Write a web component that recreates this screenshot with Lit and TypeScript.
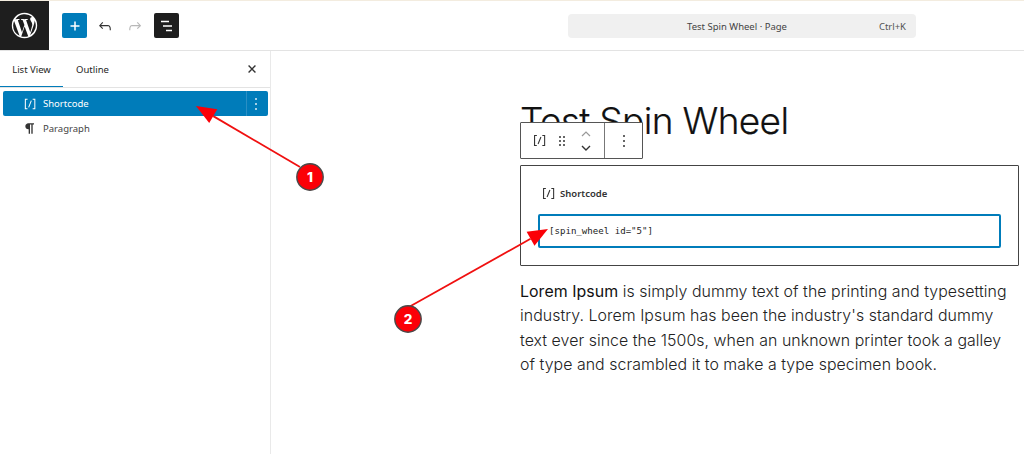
import { LitElement, html, css, svg } from "lit";
import { customElement } from "lit/decorators.js";

const shortcodeIcon = (size: number, color: string) => html`<svg width=${size} height=${size} viewBox="0 0 24 24" fill=${color}><path d="M16 4.2v1.5h2.5v12.5H16v1.5h4V4.2h-4zM4.2 19.8h4v-1.5H5.8V5.8h2.5V4.2h-4l-.1 15.6zm5.1-3.1l1.4.6 4-10-1.4-.6-4 10z"/></svg>`;

const arrow = (x1: number, y1: number, x2: number, y2: number, cx: number, cy: number, n: string) => {
  const a = Math.atan2(y1 - y2, x1 - x2);
  const l = 20, w = 8;
  const bx = x2 + Math.cos(a) * l, by = y2 + Math.sin(a) * l;
  const px = -Math.sin(a) * w, py = Math.cos(a) * w;
  return svg`
    <line x1=${x1} y1=${y1} x2=${bx} y2=${by} stroke="#f01010" stroke-width="1.8"/>
    <polygon points="${x2},${y2} ${bx + px},${by + py} ${bx - px},${by - py}" fill="#fb0007"/>
    <circle cx=${cx} cy=${cy} r="13.2" fill="#fb0007" stroke="#4a4a4a" stroke-width="1.4"/>
    <text x=${cx} y=${cy + 5} text-anchor="middle" font-family="Inter, sans-serif" font-size="13.5" font-weight="800" fill="#fff">${n}</text>`;
};

@customElement("app-root")
export class AppRoot extends LitElement {
  static styles = css`
    :host { display: block; position: relative; width: 1024px; height: 454px; overflow: hidden; background: #fff; font-family: "Noto Sans", sans-serif; color: #1e1e1e; }
    .stripe { height: 1px; background: #f3ecdf; }
    .top { height: 49px; border-bottom: 1px solid #e3e3e3; display: flex; align-items: center; position: relative; box-sizing: content-box; }
    .logo { width: 49px; height: 49px; background: #1e1e1e; display: flex; align-items: center; justify-content: center; flex: none; }
    .tools { display: flex; align-items: center; margin-left: 13px; gap: 6px; }
    .add { width: 25px; height: 25px; border-radius: 2px; background: #007cba; display: flex; align-items: center; justify-content: center; }
    .ico { width: 24px; height: 24px; display: flex; align-items: center; justify-content: center; }
    .lv { width: 25px; height: 25px; border-radius: 2px; background: #1e1e1e; display: flex; align-items: center; justify-content: center; margin-left: 1px; }
    .cmd { position: absolute; left: 568px; top: 13px; width: 348px; height: 24px; border-radius: 4px; background: #f0f0f0; display: flex; align-items: center; justify-content: center; font-size: 9.5px; color: #444; padding-right: 10px; box-sizing: border-box; }
    .cmd .k { position: absolute; right: 10px; font-size: 9.5px; color: #555; }
    .main { display: flex; height: 403px; }
    .side { width: 271px; box-sizing: border-box; border-right: 1px solid #e9e9e9; flex: none; }
    .tabs { height: 36px; border-bottom: 1px solid #e3e3e3; display: flex; align-items: center; position: relative; font-size: 9.5px; }
    .tab { width: 63px; text-align: center; height: 36px; line-height: 37px; box-sizing: border-box; }
    .tab.on { border-bottom: 1.5px solid #007cba; }
    .tab.o { width: 59px; }
    .x { position: absolute; right: 12px; top: 12px; width: 12px; height: 12px; }
    .list { padding: 3px 2px 0 3px; }
    .row { height: 25px; display: flex; align-items: center; font-size: 9.5px; border-radius: 2px; color: #444; }
    .row.sel { background: #007cba; color: #fff; }
    .row .i { width: 16px; height: 16px; margin-left: 19px; margin-right: 5px; display: flex; align-items: center; justify-content: center; }
    .row .name { flex: 1; }
    .row .more { width: 22px; height: 25px; box-sizing: border-box; border-left: 1px solid #2a8fc4; padding-right: 4px; display: flex; align-items: center; justify-content: center; }
    .canvas { flex: 1; position: relative; padding: 0 5px 0 249px; }
    h1 { margin: 40px 0 0; height: 74px; font: 300 37px/60px Inter, sans-serif; color: #111; letter-spacing: -0.65px; -webkit-text-stroke: 0.2px #111; }
    .tb { position: absolute; left: 249px; top: 71px; width: 123px; height: 37px; border: 1px solid #555; background: #fff; box-sizing: border-box; display: flex; align-items: center; border-radius: 1px; }
    .tb .a { width: 84px; height: 35px; border-right: 1px solid #777; display: flex; align-items: center; padding-left: 10px; box-sizing: border-box; flex: none; }
    .tb .b { flex: 1; display: flex; align-items: center; justify-content: center; }
    .box { height: 101px; box-sizing: border-box; border: 1px solid #444; border-radius: 1px; padding: 16px 17px 0; }
    .lbl { display: flex; align-items: center; font-size: 9.5px; font-weight: 600; color: #333; height: 22px; gap: 3px; padding-left: 2px; }
    .input { margin-top: 10px; height: 34px; box-sizing: border-box; border: 2px solid #007cba; border-radius: 2px; display: flex; align-items: center; padding-left: 9px; font: 9.1px "DejaVu Sans Mono", monospace; color: #222; }
    p { margin: 14px 0 0; font: 300 15.9px/24.3px Inter, sans-serif; color: #222; letter-spacing: 0.05px; }
    p b { font-weight: 400; color: #111; }
    .over { position: absolute; inset: 0; pointer-events: none; }
  `;

  render() {
    return html`
      <div class="stripe"></div>
      <div class="top">
        <div class="logo">
          <svg width="29" height="29" viewBox="0 0 24 24" fill="#fff"><path d="M12 1.5a10.5 10.5 0 1 0 0 21 10.5 10.5 0 0 0 0-21zM2.6 12c0-1.4.3-2.7.8-3.8l4.5 12.3A9.4 9.4 0 0 1 2.6 12zm9.4 9.4c-.9 0-1.8-.1-2.7-.4l2.8-8.2 2.9 7.9.1.1c-1 .4-2 .6-3.1.6zm1.3-13.8c.6 0 1.1-.1 1.1-.1.5-.1.5-.8 0-.8 0 0-1.5.1-2.5.1-.9 0-2.4-.1-2.4-.1-.5 0-.6.8 0 .8 0 0 .5.1 1 .1l1.4 3.9-2 6.1-3.4-10c.6 0 1.1-.1 1.1-.1.5-.1.5-.8 0-.8 0 0-1.5.1-2.5.1h-.6A9.4 9.4 0 0 1 18.4 5h-.1c-.9 0-1.6.8-1.6 1.7 0 .8.5 1.4.9 2.2.4.6.8 1.4.8 2.5 0 .8-.3 1.7-.7 3l-.9 3.1-3.5-10zm3.4 12.5l2.9-8.3c.5-1.3.7-2.4.7-3.3 0-.3 0-.6-.1-.9A9.4 9.4 0 0 1 16.7 20.1z"/></svg>
        </div>
        <div class="tools">
          <div class="add"><svg width="14" height="14" viewBox="0 0 14 14"><path d="M7 2.5v9M2.5 7h9" stroke="#fff" stroke-width="1.5"/></svg></div>
          <div class="ico"><svg width="18" height="18" viewBox="0 0 24 24" fill="#333"><path d="M18.3 11.7c-.6-.6-1.4-.9-2.3-.9H6.7l2.9-3.3-1.1-1-4.5 5L8.5 16l1-1-2.7-2.7H16c.5 0 .9.2 1.3.5 1 1 1 3.4 1 4.5v.3h1.5v-.2c0-1.5 0-4.3-1.5-5.7z"/></svg></div>
          <div class="ico"><svg width="18" height="18" viewBox="0 0 24 24" fill="#b8b8b8"><path d="M15.6 6.5l-1.1 1 2.9 3.3H8c-.9 0-1.7.3-2.3.9-1.4 1.5-1.4 4.2-1.4 5.6v.2h1.5v-.3c0-1.1 0-3.5 1-4.5.3-.3.7-.5 1.3-.5h9.2L14.5 15l1.1 1.1 4.6-4.6-4.6-5z"/></svg></div>
          <div class="lv"><svg width="18" height="18" viewBox="0 0 18 18"><path d="M3 4.5h8M5 9h9M8 13.5h6" stroke="#fff" stroke-width="1.4"/></svg></div>
        </div>
        <div class="cmd">Test Spin Wheel · Page<span class="k">Ctrl+K</span></div>
      </div>
      <div class="main">
        <div class="side">
          <div class="tabs">
            <div class="tab on">List View</div>
            <div class="tab o">Outline</div>
            <svg class="x" viewBox="0 0 14 14"><path d="M3 3l8 8M11 3l-8 8" stroke="#333" stroke-width="1.6"/></svg>
          </div>
          <div class="list">
            <div class="row sel">
              <span class="i">${shortcodeIcon(18, "#fff")}</span><span class="name">Shortcode</span>
              <span class="more"><svg width="4" height="14" viewBox="0 0 4 14" fill="#dcecf5"><circle cx="2" cy="2" r="1"/><circle cx="2" cy="7" r="1"/><circle cx="2" cy="12" r="1"/></svg></span>
            </div>
            <div class="row">
              <span class="i"><svg width="17" height="17" viewBox="0 0 24 24" fill="#333"><path d="M18 4H9.5C7 4 5 6 5 8.5S7 13 9.5 13H10v7h2V6h2v14h2V6h2V4z"/></svg></span><span class="name">Paragraph</span>
            </div>
          </div>
        </div>
        <div class="canvas">
          <h1>Test Spin Wheel</h1>
          <div class="tb">
            <div class="a">
              ${shortcodeIcon(17, "#333")}
              <svg width="14" height="14" viewBox="0 0 14 14" fill="#333" style="margin-left:7px"><circle cx="5" cy="3" r="1"/><circle cx="9" cy="3" r="1"/><circle cx="5" cy="7" r="1"/><circle cx="9" cy="7" r="1"/><circle cx="5" cy="11" r="1"/><circle cx="9" cy="11" r="1"/></svg>
              <svg width="14" height="24" viewBox="0 0 14 24" fill="none" style="margin-left:10px"><path d="M3 7l4-4 4 4" stroke="#999" stroke-width="1.2"/><path d="M3 17l4 4 4-4" stroke="#333" stroke-width="1.4"/></svg>
            </div>
            <div class="b"><svg width="4" height="14" viewBox="0 0 4 14" fill="#333"><circle cx="2" cy="2" r="1"/><circle cx="2" cy="7" r="1"/><circle cx="2" cy="12" r="1"/></svg></div>
          </div>
          <div class="box">
            <div class="lbl">${shortcodeIcon(17, "#333")}<span>Shortcode</span></div>
            <div class="input">[spin_wheel id="5"]</div>
          </div>
          <p><b>Lorem Ipsum</b> is simply dummy text of the printing and typesetting industry. Lorem Ipsum has been the industry's standard dummy text ever since the 1500s, when an unknown printer took a galley of type and scrambled it to make a type specimen book.</p>
        </div>
      </div>
      <svg class="over" width="1024" height="454">
        ${arrow(300, 167, 196, 106, 310, 177, "1")}
        ${arrow(400, 312, 548, 229, 408, 319, "2")}
      </svg>
    `;
  }
}
